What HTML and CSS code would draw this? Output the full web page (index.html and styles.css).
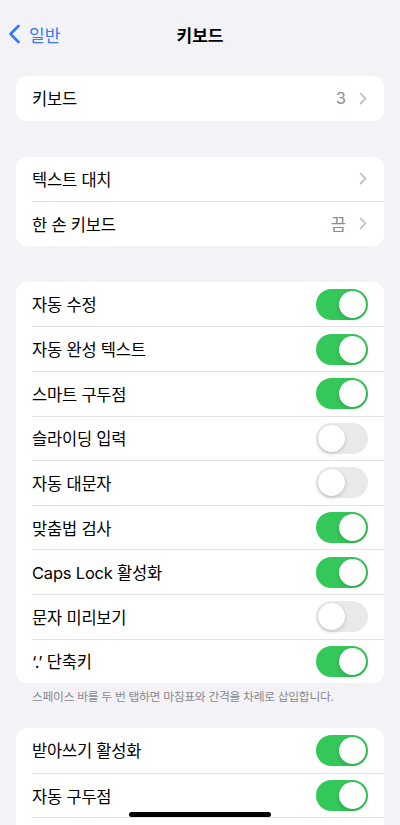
FILE: index.html
```html
<!DOCTYPE html>
<html lang="ko">
<head>
  <meta charset="UTF-8">
  <title>키보드</title>
  <meta name="viewport" content="width=device-width, initial-scale=1.0">
  <link rel="stylesheet" href="styles.css">
</head>
<body>

  <header class="nav">
    <a class="back" href="#">
      <svg width="13" height="20" viewBox="0 0 13 20"><path d="M10.5 2 L2.5 10 L10.5 18" fill="none" stroke="#3478f6" stroke-width="2.6" stroke-linecap="round" stroke-linejoin="round"/></svg>
      <span>일반</span>
    </a>
    <h1 class="title">키보드</h1>
    <div></div>
  </header>

  <main class="list">
    <section class="group g1">
      <div class="row"><div class="row-inner"><span class="label">키보드</span><span class="value">3</span><span class="chev"></span></div></div>
    </section>

    <section class="group g2">
      <div class="row"><div class="row-inner"><span class="label">텍스트 대치</span><span class="chev"></span></div></div>
      <div class="row"><div class="row-inner"><span class="label">한 손 키보드</span><span class="value">끔</span><span class="chev"></span></div></div>
    </section>

    <section class="group g3">
      <div class="row"><div class="row-inner"><span class="label">자동 수정</span><span class="toggle on"></span></div></div>
      <div class="row"><div class="row-inner"><span class="label">자동 완성 텍스트</span><span class="toggle on"></span></div></div>
      <div class="row"><div class="row-inner"><span class="label">스마트 구두점</span><span class="toggle on"></span></div></div>
      <div class="row"><div class="row-inner"><span class="label">슬라이딩 입력</span><span class="toggle"></span></div></div>
      <div class="row"><div class="row-inner"><span class="label">자동 대문자</span><span class="toggle"></span></div></div>
      <div class="row"><div class="row-inner"><span class="label">맞춤법 검사</span><span class="toggle on"></span></div></div>
      <div class="row"><div class="row-inner"><span class="label">Caps Lock 활성화</span><span class="toggle on"></span></div></div>
      <div class="row"><div class="row-inner"><span class="label">문자 미리보기</span><span class="toggle"></span></div></div>
      <div class="row"><div class="row-inner"><span class="label">‘.’ 단축키</span><span class="toggle on"></span></div></div>
    </section>
    <p class="footer">스페이스 바를 두 번 탭하면 마침표와 간격을 차례로 삽입합니다.</p>

    <section class="group g4">
      <div class="row"><div class="row-inner"><span class="label">받아쓰기 활성화</span><span class="toggle on"></span></div></div>
      <div class="row"><div class="row-inner"><span class="label">자동 구두점</span><span class="toggle on"></span></div></div>
      <div class="row"><div class="row-inner"></div></div>
    </section>
  </main>

  <div class="home-bar"></div>

</body>
</html>
```

FILE: styles.css
```css
* {
  box-sizing: border-box;
}

html, body {
  height: 100%;
  overflow: hidden;
}

body {
  margin: 0;
  background: #f2f2f7;
  font-family: Inter, "Noto Sans CJK KR", sans-serif;
  color: #000;
}

.nav {
  display: grid;
  grid-template-columns: 1fr auto 1fr;
  align-items: center;
  height: 44px;
  margin-top: 12px;
}

.back {
  display: flex;
  align-items: center;
  gap: 8px;
  padding-left: 8px;
  color: #3478f6;
  text-decoration: none;
  font-size: 17px;
}

.back svg {
  margin-top: -1px;
}

.title {
  margin: 0;
  font-size: 17px;
  font-weight: 700;
}

.list {
  padding: 0 16px;
}

.group {
  background: #ffffff;
  border-radius: 11px;
  overflow: hidden;
}

.g1 {
  margin-top: 20px;
}

.g2, .g3 {
  margin-top: 36px;
}

.row {
  padding-left: 16px;
}

.row-inner {
  display: flex;
  align-items: center;
  height: 44.6px;
  padding-right: 16px;
}

.row + .row .row-inner {
  border-top: 1px solid #e2e2e6;
}

.label {
  flex: 1;
  font-size: 16.5px;
  letter-spacing: -0.2px;
}

.value {
  color: #8a8a8e;
  font-size: 16.5px;
  margin-right: 13px;
}

.chev {
  width: 8px;
  height: 13px;
  margin-right: 1px;
  background: url("data:image/svg+xml,%3Csvg xmlns='http://www.w3.org/2000/svg' width='8' height='13' viewBox='0 0 8 13'%3E%3Cpath d='M1.5 1.5 L6.5 6.5 L1.5 11.5' fill='none' stroke='%23c4c4c7' stroke-width='1.8' stroke-linecap='round' stroke-linejoin='round'/%3E%3C/svg%3E") no-repeat center;
}

.toggle {
  position: relative;
  width: 52px;
  height: 31px;
  border-radius: 16px;
  background: #e9e9eb;
}

.toggle::after {
  content: "";
  position: absolute;
  top: 2px;
  left: 2px;
  width: 27px;
  height: 27px;
  border-radius: 50%;
  background: #ffffff;
  box-shadow: 0 2px 4px rgba(0, 0, 0, 0.15), 0 0 1px rgba(0, 0, 0, 0.12);
}

.toggle.on {
  background: #34c759;
}

.toggle.on::after {
  left: 23px;
}

.footer {
  margin: 6px 0 23px;
  padding: 0 16px;
  font-size: 11.8px;
  line-height: 16px;
  color: #8a8a8e;
  letter-spacing: -0.3px;
}

.home-bar {
  position: fixed;
  left: 129px;
  bottom: 8px;
  width: 142px;
  height: 5px;
  border-radius: 3px;
  background: #000;
}
```
